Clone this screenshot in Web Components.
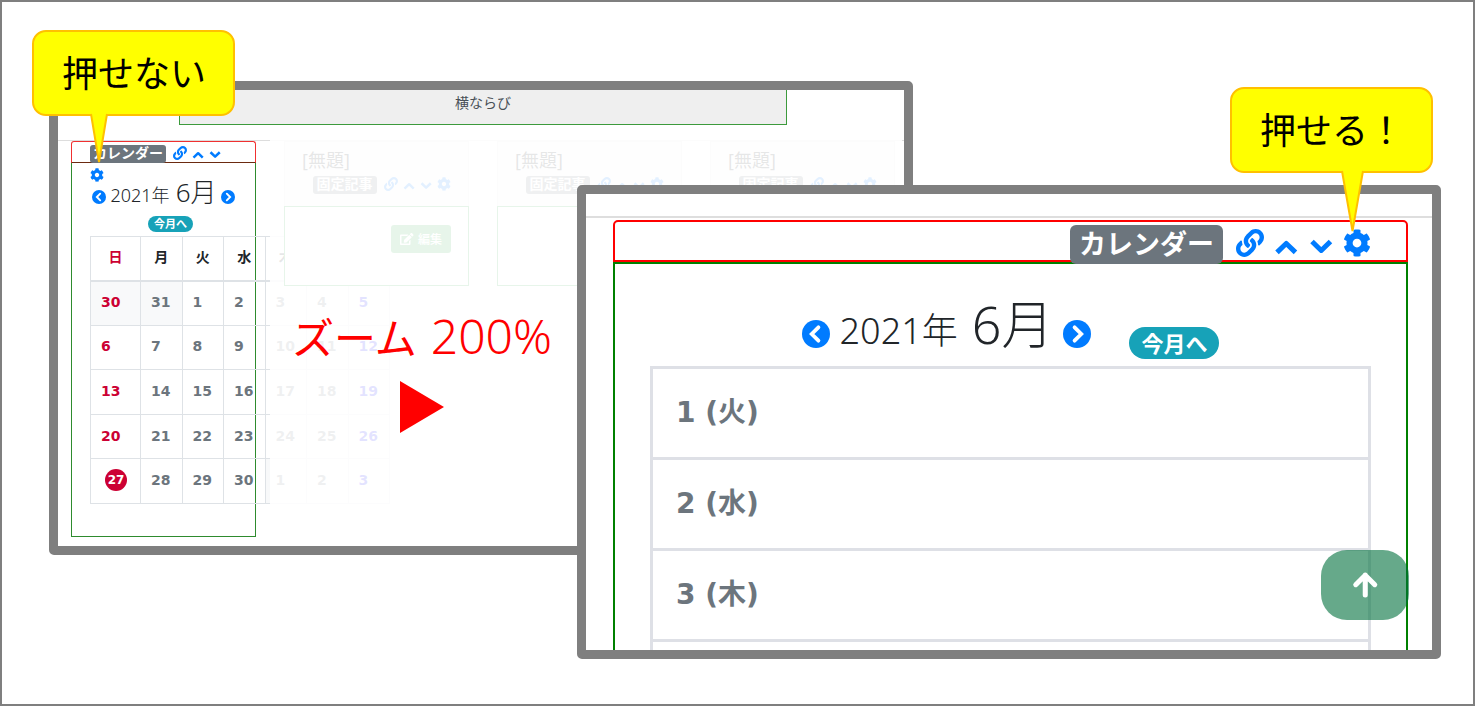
<!DOCTYPE html>
<html lang="ja">
<head>
<meta charset="utf-8">
<title>カレンダー ズーム 200%</title>
<style>
  body {
    margin: 0;
    background: #fff;
    color: #212529;
    font-family: "Noto Sans", "Noto Sans CJK JP", sans-serif;
  }
</style>
</head>
<body>
<zoom-slide></zoom-slide>

<script>
const ICONS = {
  link: [512, '<path d="M326.612 185.391c59.747 59.809 58.927 155.698.36 214.59-.11.12-.24.25-.36.37l-67.2 67.2c-59.27 59.27-155.699 59.262-214.96 0-59.27-59.26-59.27-155.7 0-214.96l37.106-37.106c9.84-9.84 26.786-3.3 27.294 10.606.648 17.722 3.826 35.527 9.69 52.721 1.986 5.822.567 12.262-3.783 16.612l-13.087 13.087c-28.026 28.026-28.905 73.66-1.155 101.96 28.024 28.579 74.086 28.749 102.325.51l67.2-67.19c28.191-28.191 28.073-73.757 0-101.83-3.701-3.694-7.429-6.564-10.341-8.569a16.037 16.037 0 0 1-6.947-12.606c-.396-10.567 3.348-21.456 11.698-29.806l21.054-21.055c5.521-5.521 14.182-6.199 20.584-1.731a152.482 152.482 0 0 1 20.522 17.197zM467.547 44.449c-59.261-59.262-155.69-59.27-214.96 0l-67.2 67.2c-.12.12-.25.25-.36.37-58.566 58.892-59.387 154.781.36 214.59a152.454 152.454 0 0 0 20.521 17.196c6.402 4.468 15.064 3.789 20.584-1.731l21.054-21.055c8.35-8.35 12.094-19.239 11.698-29.806a16.037 16.037 0 0 0-6.947-12.606c-2.912-2.005-6.64-4.875-10.341-8.569-28.073-28.073-28.191-73.639 0-101.83l67.2-67.19c28.239-28.239 74.3-28.069 102.325.51 27.75 28.3 26.872 73.934-1.155 101.96l-13.087 13.087c-4.35 4.35-5.769 10.79-3.783 16.612 5.864 17.194 9.042 34.999 9.69 52.721.509 13.906 17.454 20.446 27.294 10.606l37.106-37.106c59.271-59.259 59.271-155.699.001-214.959z"/>'],
  up: [448, '<path d="M55 428L224 264l169 164" fill="none" stroke="currentColor" stroke-width="92" stroke-linejoin="round"/>'],
  down: [448, '<path d="M55 228L224 392l169-164" fill="none" stroke="currentColor" stroke-width="92" stroke-linejoin="round"/>'],
  cog: [512, '<path d="M487.4 315.7l-42.6-24.6c4.3-23.2 4.3-47 0-70.2l42.6-24.6c4.9-2.8 7.1-8.6 5.5-14-11.1-35.6-30-67.8-54.7-94.6-3.8-4.1-10-5.1-14.8-2.3L380.8 110c-17.9-15.4-38.5-27.3-60.8-35.1V25.8c0-5.6-3.9-10.5-9.4-11.7-36.7-8.2-74.3-7.8-109.2 0-5.5 1.2-9.4 6.1-9.4 11.7V75c-22.2 7.9-42.8 19.8-60.8 35.1L88.7 85.5c-4.9-2.8-11-1.9-14.8 2.3-24.7 26.7-43.6 58.9-54.7 94.6-1.7 5.4.6 11.2 5.5 14L67.3 221c-4.3 23.2-4.3 47 0 70.2l-42.6 24.6c-4.9 2.8-7.1 8.6-5.5 14 11.1 35.6 30 67.8 54.7 94.6 3.8 4.1 10 5.1 14.8 2.3l42.6-24.6c17.9 15.4 38.5 27.3 60.8 35.1v49.2c0 5.6 3.9 10.5 9.4 11.7 36.7 8.2 74.3 7.8 109.2 0 5.5-1.2 9.4-6.1 9.4-11.7v-49.2c22.2-7.9 42.8-19.8 60.8-35.1l42.6 24.6c4.9 2.8 11 1.9 14.8-2.3 24.7-26.7 43.6-58.9 54.7-94.6 1.5-5.5-.7-11.3-5.6-14.1zM256 336c-44.1 0-80-35.9-80-80s35.9-80 80-80 80 35.9 80 80-35.9 80-80 80z"/>'],
  prev: [512, '<circle cx="256" cy="256" r="256"/><path d="M300 134L178 256l122 122" fill="none" stroke="#fff" stroke-width="70" stroke-linecap="round"/>'],
  next: [512, '<circle cx="256" cy="256" r="256"/><path d="M212 134l122 122-122 122" fill="none" stroke="#fff" stroke-width="70" stroke-linecap="round"/>'],
  arrow: [448, '<path d="M224 440V74M50 250L224 76l174 174" fill="none" stroke="currentColor" stroke-width="92" stroke-linejoin="round" stroke-linecap="round"/>'],
  edit: [576, '<path d="M402.6 83.2l90.2 90.2c3.8 3.8 3.8 10 0 13.8L274.4 405.6l-92.8 10.3c-12.4 1.4-22.9-9.1-21.5-21.5l10.3-92.8L388.8 83.2c3.8-3.8 10-3.8 13.8 0zm162-22.9l-48.8-48.8c-15.2-15.2-39.9-15.2-55.2 0l-35.4 35.4c-3.8 3.8-3.8 10 0 13.8l90.2 90.2c3.8 3.8 10 3.8 13.8 0l35.4-35.4c15.2-15.3 15.2-40 0-55.2zM384 346.2V448H64V128h229.8c3.2 0 6.2-1.3 8.5-3.5l40-40c7.6-7.6 2.2-20.5-8.5-20.5H48C21.5 64 0 85.5 0 112v352c0 26.5 21.5 48 48 48h352c26.5 0 48-21.5 48-48V306.2c0-10.7-12.9-16-20.5-8.5l-40 40c-2.2 2.3-3.5 5.3-3.5 8.5z"/>']
};

function define(name, markup) {
  customElements.define(name, class extends HTMLElement {
    constructor() {
      super();
      const root = this.attachShadow({ mode: 'open' });
      root.innerHTML = typeof markup === 'function' ? markup(this) : markup;
    }
  });
}

/* One icon, as tall as the current font size. */
customElements.define('fa-icon', class extends HTMLElement {
  connectedCallback() {
    if (this.shadowRoot) return;
    const [w, body] = ICONS[this.getAttribute('name')];
    this.attachShadow({ mode: 'open' }).innerHTML = `
      <style>:host{display:inline-flex;flex:none} svg{display:block;height:1em;overflow:visible}</style>
      <svg viewBox="0 0 ${w} 512" fill="currentColor" aria-hidden="true">${body}</svg>`;
  }
});

/* Frame name badge with the link, order and settings icons. */
define('frame-tools', `
  <style>
    :host { display: flex; flex-wrap: wrap; align-items: center; gap: 1px var(--tool-gap, 5px);
            font-size: var(--tool-size, 14px); line-height: var(--tool-line, 21px); }
    .badge { background: #6c757d; color: #fff; font-weight: 700; font-size: var(--badge-size, 14px); font-family: "Noto Sans CJK JP", sans-serif;
             line-height: var(--badge-line, 15px); padding: 0 var(--badge-pad, 3px) 3px; border-radius: var(--badge-radius, 3px);
             margin: 3px var(--badge-gap, 2px) 0 0; white-space: nowrap; }
    a { color: #007bff; display: flex; align-items: center; height: var(--tool-line, 21px); text-decoration: none; }
  </style>
  <span class="badge"><slot></slot></span>
  <a href="#link" aria-label="リンク"><fa-icon name="link"></fa-icon></a>
  <a href="#up" aria-label="上へ"><fa-icon name="up"></fa-icon></a>
  <a href="#down" aria-label="下へ"><fa-icon name="down"></fa-icon></a>
  <a href="#setting" aria-label="設定"><fa-icon name="cog"></fa-icon></a>`);

/* Year and month with the previous / next links and the link to this month. */
define('month-nav', `
  <style>
    :host { display: flex; flex-wrap: wrap; justify-content: center; align-items: center; column-gap: var(--nav-gap, 5px);
            color: #212529; font-weight: 300; font-size: var(--nav-size, 18px); line-height: var(--nav-line, 32px); }
    .label { display: flex; align-items: baseline; column-gap: var(--label-gap, 6px); }
    .month { font-size: var(--month-size, 26px); }
    a { text-decoration: none; display: flex; }
    .step { color: #007bff; font-size: var(--step-size, 14px); padding-top: var(--step-drop, 6px); }
    .today { background: #17a2b8; color: #fff; font: 700 var(--today-size, 11px)/var(--today-line, 14px) "Noto Sans CJK JP", sans-serif;
             padding: 0 var(--today-pad, 6px) 2px; border-radius: 20px; margin: var(--today-margin, 5px 0 0 14px); }
  </style>
  <a class="step" href="#prev" aria-label="前月"><fa-icon name="prev"></fa-icon></a>
  <span class="label"><span>2021年</span><span class="month">6月</span></span>
  <a class="step" href="#next" aria-label="次月"><fa-icon name="next"></fa-icon></a>
  <a class="today" href="#today">今月へ</a>`);

/* Month grid. */
define('month-table', () => {
  const days = [30, 31, ...Array.from({ length: 30 }, (_, i) => i + 1), 1, 2, 3];
  const kind = c => c === 0 ? 'sun' : c === 6 ? 'sat' : '';
  let rows = '';
  for (let r = 0; r < 5; r++) {
    rows += '<tr>' + days.slice(r * 7, r * 7 + 7).map((d, c) => {
      const i = r * 7 + c;
      const other = i < 2 || i > 31 ? ' other' : '';
      return `<td class="${kind(c)}${other}">${i === 28 ? '<span class="now">27</span>' : d}</td>`;
    }).join('') + '</tr>';
  }
  const heads = [...'日月火水木金土'].map((t, c) => `<th scope="col" class="${kind(c)}">${t}</th>`).join('');
  return `
  <style>
    :host { display: block; }
    table { border-collapse: collapse; table-layout: fixed; width: 300px; height: 268px;
            font: 700 14px/20px "DejaVu Sans", "Noto Sans CJK JP", sans-serif; color: #6c757d; }
    col:first-child { width: 50px; }
    tr { height: 44px; }
    th, td { border: 1px solid #dee2e6; padding: 0 0 2px 10px; text-align: left; }
    th { border-bottom-width: 2px; padding: 0 0 2px; text-align: center; color: #212529; }
    .other { background: #f8f9fa; }
    .sun { color: #cc0033; }
    .sat { color: #0000ff; }
    .now { display: block; width: 22px; margin-left: 4px; border-radius: 50%; background: #cc0033; color: #fff;
           font-size: 12px; line-height: 22px; text-align: center; }
  </style>
  <table><colgroup><col><col><col><col><col><col><col></colgroup>
  <thead><tr>${heads}</tr></thead><tbody>${rows}</tbody></table>`;
});

/* Calendar frame as it stands in the narrow column. */
define('calendar-frame', `
  <style>
    :host { display: flex; flex-direction: column; height: 396px; box-sizing: border-box; min-width: 0; }
    header { height: 22px; box-sizing: border-box; border: 1px solid #f03030; border-bottom-color: #6b2a10;
             border-radius: 3px 3px 0 0; padding: 0 17px 0 18px; }
    section { flex: 1; border: 1px solid #2e8b2e; border-top: 0; padding: 13px 18px 0; }
    month-table { margin-top: 4px; }
  </style>
  <header><frame-tools>カレンダー</frame-tools></header>
  <section><month-nav></month-nav><month-table></month-table></section>`);

/* Untitled article frame. */
define('article-frame', `
  <style>
    :host { display: flex; flex-direction: column; min-width: 0; position: relative; background: #fff; align-self: start; }
    header { height: 65px; box-sizing: border-box; border: 1px solid #dfdfdf; border-bottom: 0; background: #f7f7f7; padding: 7px 17px 0; }
    h2 { margin: 0; font-size: 18px; font-weight: 400; line-height: 22px; }
    frame-tools { justify-content: flex-end; padding-top: 2px; --badge-pad: 4px; }
    section { height: 80px; box-sizing: border-box; border: 1px solid #28a745; padding: 18px 17px; display: flex; justify-content: flex-end; align-items: flex-start; }
    button { display: flex; align-items: center; gap: 4px; border: 0; border-radius: 3px; background: #28a745; color: #fff;
             font: 500 12px/28px "Noto Sans CJK JP", sans-serif; padding: 0 9px; }
  </style>
  <header><h2>[無題]</h2><frame-tools>固定記事</frame-tools></header>
  <section><button type="button"><fa-icon name="edit"></fa-icon>編集</button></section>`);

/* Page at 100%. */
define('page-normal', `
  <style>
    :host { display: flex; flex-direction: column; height: 100%; position: relative; }
    .lane { margin: 0 117px 0 121px; height: 35px; box-sizing: border-box; border: 1px solid #3c9a3c; border-top: 0;
            background: #efefef; color: #495057; font-size: 14px; line-height: 26px; text-align: center; }
    .columns { display: grid; grid-template-columns: repeat(4, minmax(0, 1fr)); gap: 28px; margin-top: 15px;
               border-top: 1px solid #ddd; padding: 0 9px 0 13px; }
    .veil { position: absolute; inset: 42px 2px 0 212px; background: #fff; opacity: .89; }
  </style>
  <div class="lane">横ならび</div>
  <div class="columns">
    <calendar-frame></calendar-frame>
    <article-frame></article-frame><article-frame></article-frame><article-frame></article-frame>
  </div>
  <div class="veil"></div>`);

/* Page at 200%. */
define('page-zoomed', `
  <style>
    :host { display: block; height: 100%; position: relative; padding-top: 22px; box-sizing: border-box; }
    .frame { border-top: 2px solid #dedede; padding: 2px 24px 0 27px; }
    header { height: 42px; box-sizing: border-box; border: 2px solid #f00; border-radius: 5px 5px 0 0; padding: 0 35px; }
    frame-tools { justify-content: flex-end; --tool-size: 28px; --tool-gap: 10px; --tool-line: 40px; --badge-size: 27px;
                  --badge-line: 36px; --badge-pad: 9px; --badge-radius: 6px; --badge-gap: 3px; }
    section { border: 2px solid #008000; border-bottom: 0; padding: 0 35px; }
    month-nav { height: 102px; padding-top: 24px; box-sizing: border-box; --nav-gap: 10px; --nav-size: 36px; --nav-line: 72px; --label-gap: 14px;
                --month-size: 52px; --step-size: 28px; --step-drop: 12px; --today-size: 22px; --today-line: 30px;
                --today-pad: 12px; --today-margin: 30px 0 0 28px; }
    table { width: 100%; border-collapse: collapse; font: 700 28px/42px "DejaVu Sans", "Noto Sans CJK JP", sans-serif; color: #6c757d; }
    td { border: 3px solid #dee0e6; height: 88px; padding: 0 23px; }
    button { position: absolute; right: 23px; bottom: 30px; width: 88px; height: 70px; border: 0; border-radius: 26px; padding: 0;
             background: #00703c99; color: #fff; font-size: 28px; display: flex; align-items: center; justify-content: center; }
  </style>
  <div class="frame">
    <header><frame-tools>カレンダー</frame-tools></header>
    <section>
      <month-nav></month-nav>
      <table><tbody><tr><td>1 (火)</td></tr><tr><td>2 (水)</td></tr><tr><td>3 (木)</td></tr><tr><td></td></tr></tbody></table>
    </section>
  </div>
  <button type="button" aria-label="ページの先頭へ"><fa-icon name="arrow"></fa-icon></button>`);

/* Thick grey window frame; a callout may lie over it. */
define('window-frame', `
  <style>
    :host { display: block; position: relative; min-width: 0; }
    .view { height: 100%; box-sizing: border-box; border: 9px solid #7f7f7f; border-radius: 5px; background: #fff; }
    .clip { height: 100%; overflow: hidden; }
  </style>
  <div class="view"><div class="clip"><slot></slot></div></div>
  <slot name="callout"></slot>`);

/* Yellow speech bubble; its tail hangs from the lower edge. */
define('call-out', `
  <style>
    :host { display: block; position: absolute; width: 203px; }
    .bubble { box-sizing: border-box; height: 86px; border: 2px solid #ffc000; border-radius: 14px; background: #ff0; color: #000;
              font: 400 36px/78px "Noto Sans CJK JP", sans-serif; padding-left: 28px; white-space: nowrap; }
    svg { position: absolute; top: 84px; left: var(--tail-x); width: var(--tail-w); height: var(--tail-h); overflow: visible; }
  </style>
  <div class="bubble"><slot></slot></div>
  <svg viewBox="0 0 20 50" preserveAspectRatio="none" aria-hidden="true">
    <path d="M0 0L10 50L20 0" fill="#ff0" stroke="#ffc000" stroke-width="2" vector-effect="non-scaling-stroke"/>
  </svg>`);

define('zoom-slide', `
  <style>
    :host { display: grid; box-sizing: border-box; min-height: 100vh; border: 2px solid #7f7f7f;
            grid-template-columns: minmax(0, 47fr) minmax(0, 528fr) minmax(0, 336fr) minmax(0, 528fr) minmax(0, 32fr);
            grid-template-rows: 79px 104px 370px 104px 1fr; }
    .before { grid-area: 2 / 2 / 4 / 4; }
    .after { grid-area: 3 / 3 / 5 / 5; }
    .before call-out { left: -17px; top: -51px; --tail-x: 59px; --tail-w: 16px; --tail-h: 48px; }
    .after call-out { right: 8px; top: -98px; --tail-x: 112px; --tail-w: 21px; --tail-h: 60px; }
    .step { grid-area: 3 / 2; justify-self: start; margin: 118px 0 0 243px; position: relative; color: #f00;
            display: flex; flex-direction: column; align-items: center; gap: 12px; }
    .step p { margin: 0; display: flex; gap: 14px; line-height: 66px; font-size: 48px; font-weight: 300; white-space: nowrap; }
    .step .kana { font: 400 42px/66px "Noto Sans CJK JP", sans-serif; }
    .step svg { display: block; width: 44px; height: 52px; }
  </style>
  <window-frame class="before">
    <page-normal></page-normal>
    <call-out slot="callout">押せない</call-out>
  </window-frame>
  <div class="step">
    <p><span class="kana">ズーム</span> <span>200%</span></p>
    <svg viewBox="0 0 44 52" aria-hidden="true"><path d="M0 0L44 26L0 52Z" fill="#f00"/></svg>
  </div>
  <window-frame class="after">
    <page-zoomed></page-zoomed>
    <call-out slot="callout">押せる！</call-out>
  </window-frame>`);
</script>
</body>
</html>
